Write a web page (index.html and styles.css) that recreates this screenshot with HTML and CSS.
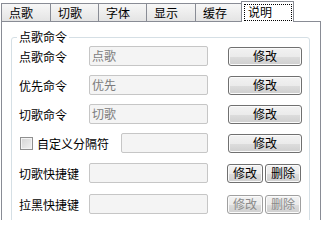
FILE: index.html
```html
<!DOCTYPE html>
<html>
<head>
<meta charset="utf-8">
<link rel="stylesheet" href="styles.css">
</head>
<body>
<div class="tabs">
  <div class="tab w50">点歌</div>
  <div class="tab w49">切歌</div>
  <div class="tab w49">字体</div>
  <div class="tab w50">显示</div>
  <div class="tab w47">缓存</div>
  <div class="tab active"><span class="focus">说明</span></div>
</div>
<div class="panel">
  <fieldset class="group">
    <legend>点歌命令</legend>
    <div class="row r1">
      <span class="label">点歌命令</span>
      <div class="field">点歌</div>
      <button class="btn wide">修改</button>
    </div>
    <div class="row r2">
      <span class="label">优先命令</span>
      <div class="field">优先</div>
      <button class="btn wide">修改</button>
    </div>
    <div class="row r3">
      <span class="label">切歌命令</span>
      <div class="field">切歌</div>
      <button class="btn wide">修改</button>
    </div>
    <div class="row r4">
      <span class="label check-label"><span class="checkbox"></span>自定义分隔符</span>
      <div class="field short"></div>
      <button class="btn wide">修改</button>
    </div>
    <div class="row r5">
      <span class="label">切歌快捷键</span>
      <div class="field"></div>
      <button class="btn small first">修改</button>
      <button class="btn small">删除</button>
    </div>
    <div class="row r6">
      <span class="label">拉黑快捷键</span>
      <div class="field"></div>
      <button class="btn small first faded">修改</button>
      <button class="btn small faded">删除</button>
    </div>
  </fieldset>
</div>
</body>
</html>
```

FILE: styles.css
```css
html, body {
  margin: 0;
  padding: 0;
  background: #ffffff;
}
body {
  font-family: "Noto Sans CJK SC", "Noto Sans", sans-serif;
  font-size: 12px;
  color: #000;
  width: 323px;
  height: 220px;
  overflow: hidden;
}
.tabs {
  display: flex;
  align-items: flex-end;
  height: 21px;
  padding-left: 1px;
}
.tab {
  box-sizing: border-box;
  height: 18px;
  border: 1px solid #898c95;
  border-bottom: none;
  margin-right: -1px;
  background: linear-gradient(#f7f7f7, #e4e4e4);
  padding-left: 7px;
  line-height: 17px;
  white-space: nowrap;
}
.w50 { width: 50px; }
.w49 { width: 49px; }
.w47 { width: 47px; }
.tab.active {
  position: relative;
  z-index: 1;
  width: 53px;
  height: 21px;
  margin-bottom: -1px;
  background: #ffffff;
  padding-left: 2px;
  padding-top: 2px;
}
.focus {
  display: block;
  box-sizing: border-box;
  width: 48px;
  height: 17px;
  border: 1px dotted #000;
  padding-left: 3px;
  line-height: 14px;
}
.panel {
  box-sizing: border-box;
  margin-left: 1px;
  width: 320px;
  height: 210px;
  border: 1px solid #898c95;
  background: #ffffff;
}
.group {
  box-sizing: border-box;
  width: 299px;
  height: 205px;
  margin: 8px 0 0 9px;
  padding: 0 0 0 7px;
  border: 1px solid #d5dfe5;
  border-radius: 3px;
  min-inline-size: 0;
}
.group legend {
  padding: 0 2px;
  margin-left: -2px;
  line-height: 14px;
}
.row {
  display: flex;
  align-items: center;
  height: 20px;
}
.r1 { margin-top: 2px; }
.r2 { margin-top: 9px; }
.r3 { margin-top: 9px; }
.r4 { margin-top: 9px; }
.r5 { margin-top: 10px; }
.r6 { margin-top: 11px; }
.label {
  width: 70px;
  flex: none;
  white-space: nowrap;
}
.check-label {
  width: 102px;
  display: flex;
  align-items: center;
}
.checkbox {
  box-sizing: border-box;
  width: 13px;
  height: 13px;
  margin-left: 1px;
  margin-right: 4px;
  border: 1px solid #8f8f8f;
  background: linear-gradient(135deg, #d4d4d4, #f2f2f2);
  box-shadow: inset 0 0 0 1px #f4f4f4;
}
.field {
  box-sizing: border-box;
  width: 119px;
  height: 20px;
  flex: none;
  border: 1px solid #c6c6c6;
  border-radius: 2px;
  background: #f4f4f4;
  color: #7c7c7c;
  padding-left: 2px;
  line-height: 18px;
}
.field.short {
  width: 87px;
}
.btn {
  box-sizing: border-box;
  height: 19px;
  flex: none;
  font-family: inherit;
  font-size: 12px;
  color: #000;
  border: 1px solid #707070;
  border-radius: 3px;
  background: linear-gradient(#f2f2f2 0%, #ebebeb 50%, #dddddd 51%, #cfcfcf 100%);
  padding: 0;
  line-height: 16px;
  box-shadow: inset 0 0 0 1px #fbfbfb;
}
.btn.wide {
  width: 74px;
  margin-left: 20px;
}
.btn.small {
  width: 36px;
  margin-left: 2px;
}
.btn.small.first {
  margin-left: 19px;
}
.btn.faded {
  color: #8a8a8a;
  border-color: #a0a0a0;
}
```
